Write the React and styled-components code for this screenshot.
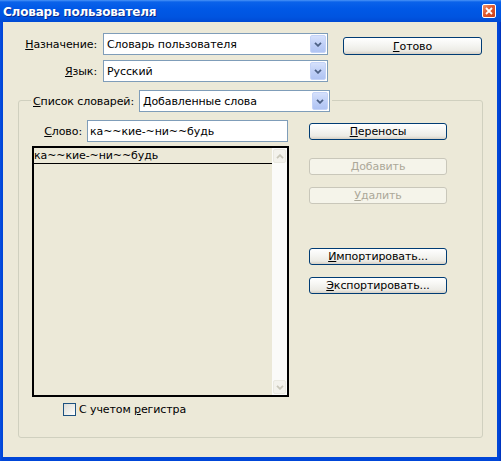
import React from 'react';
import styled, { createGlobalStyle } from 'styled-components';

const Global = createGlobalStyle`
  html, body { margin: 0; padding: 0; background: #ECE9D8; }
  body { font-family: "DejaVu Sans", Tahoma, sans-serif; font-size: 11px; color: #000; letter-spacing: -0.1px; }
  #root { width: 501px; height: 461px; }
  u { text-decoration: underline; text-underline-offset: 1px; }
`;

const Window = styled.div`
  width: 501px;
  height: 461px;
  box-sizing: border-box;
  display: flex;
  flex-direction: column;
  overflow: hidden;
  background: linear-gradient(90deg, #0a4fe0 0, #0046d8 2px, #0046d8 calc(100% - 2px), #0030b8 100%);
`;

const TitleBar = styled.div`
  height: 22px;
  flex: none;
  display: flex;
  align-items: center;
  justify-content: space-between;
  padding: 0 5px 0 3px;
  background: linear-gradient(#4a94f7 0, #0a62ea 2px, #0058e6 9px, #0054e0 17px, #004ad4 22px);
  color: #fff;
`;

const TitleText = styled.span`
  font-family: "DejaVu Sans", sans-serif;
  font-weight: bold;
  font-size: 12px;
  letter-spacing: -0.2px;
  text-shadow: 1px 1px 0 #0a2a8a;
  padding-top: 1px;
`;

const CloseBtn = styled.div`
  width: 14px;
  height: 14px;
  box-sizing: border-box;
  border: 1px solid #fff;
  border-radius: 2px;
  background: linear-gradient(135deg, #f0946c 0%, #e05a30 45%, #c8401a 100%);
  display: flex;
  align-items: center;
  justify-content: center;
`;

const Client = styled.div`
  flex: 1;
  margin: 0 4px 4px 3px;
  background: #ECE9D8;
  display: flex;
  flex-direction: column;
`;

const TopSection = styled.div`
  display: flex;
  align-items: flex-start;
  padding: 11px 0 0 4px;
`;

const FieldsGrid = styled.div`
  display: grid;
  grid-template-columns: 90px 225px;
  column-gap: 6px;
  row-gap: 5px;
  align-items: center;
`;

const Label = styled.span`
  justify-self: end;
  white-space: nowrap;
`;

const Combo = styled.div`
  box-sizing: border-box;
  width: ${(p) => p.$w}px;
  height: 22px;
  border: 1px solid #7F9DB9;
  background: #fff;
  display: flex;
  align-items: center;
  padding-left: 3px;
`;

const ComboText = styled.span`
  flex: 1;
  white-space: nowrap;
  overflow: hidden;
`;

const DropBtn = styled.div`
  box-sizing: border-box;
  width: 16px;
  height: 18px;
  margin-right: 1px;
  border: 1px solid #c4d3f8;
  border-radius: 2px;
  background: linear-gradient(#d6e1fc, #bccdf6 60%, #b0c4f3);
  display: flex;
  align-items: center;
  justify-content: center;
`;

const Button = styled.div`
  box-sizing: border-box;
  flex: none;
  width: ${(p) => p.$w || 138}px;
  height: ${(p) => p.$h || 17}px;
  margin-top: ${(p) => p.$mt || 0}px;
  margin-left: ${(p) => p.$ml || 0}px;
  border: 1px solid ${(p) => (p.$disabled ? '#C9C7BA' : '#003C74')};
  border-radius: 3px;
  background: ${(p) =>
    p.$disabled
      ? '#F5F4EA'
      : 'linear-gradient(#FFFFFF 0%, #F6F6F3 40%, #ECEBE5 80%, #D6D0C5 100%)'};
  color: ${(p) => (p.$disabled ? '#ACA899' : '#000')};
  display: flex;
  align-items: center;
  justify-content: center;
  white-space: nowrap;
`;

const Group = styled.div`
  box-sizing: border-box;
  width: 465px;
  margin: 18px 0 0 15px;
  border: 1px solid #D0D0BF;
  border-radius: 3px;
  padding-bottom: 21px;
`;

const Legend = styled.div`
  display: flex;
  align-items: center;
  gap: 5px;
  width: fit-content;
  margin: -11px 0 0 12px;
  padding: 0 2px;
  background: #ECE9D8;
`;

const Body = styled.div`
  display: flex;
  gap: 20px;
  padding-left: 13px;
`;

const LeftCol = styled.div`
  width: 257px;
  display: flex;
  flex-direction: column;
`;

const WordRow = styled.div`
  display: flex;
  justify-content: flex-end;
  align-items: center;
  gap: 5px;
  margin-top: 8px;
  padding-right: 1px;
`;

const TextBox = styled.div`
  box-sizing: border-box;
  width: 201px;
  height: 22px;
  border: 1px solid #7F9DB9;
  background: #fff;
  padding-left: 2px;
  display: flex;
  align-items: center;
  white-space: nowrap;
`;

const ListBox = styled.div`
  box-sizing: border-box;
  margin-top: 4px;
  height: 251px;
  border: 2px solid #000;
  background: #ECE9D8;
  display: flex;
`;

const ListItems = styled.div`
  flex: 1;
`;

const ListRow = styled.div`
  height: 15px;
  border-bottom: 1px solid #000;
  display: flex;
  align-items: center;
  white-space: nowrap;
`;

const ScrollBar = styled.div`
  width: 15px;
  background: #FBFBF9;
  display: flex;
  flex-direction: column;
  justify-content: space-between;
  align-items: center;
  padding: 1px 0;
  box-sizing: border-box;
`;

const ScrollBtn = styled.div`
  box-sizing: border-box;
  width: 13px;
  height: 14px;
  border: 1px solid #EAE9E1;
  border-radius: 2px;
  background: #F3F2EC;
  display: flex;
  align-items: center;
  justify-content: center;
`;

const CheckRow = styled.div`
  display: flex;
  align-items: center;
  gap: 3px;
  margin-top: 6px;
  padding-left: 31px;
  height: 13px;
`;

const CheckBox = styled.div`
  box-sizing: border-box;
  width: 13px;
  height: 13px;
  border: 1px solid #1C5180;
  background: linear-gradient(135deg, #DCDCD7 0%, #F0F0EC 60%, #FFFFFF 100%);
`;

const RightCol = styled.div`
  display: flex;
  flex-direction: column;
  padding-top: 11px;
`;

const Chevron = ({ color = '#4D6185', up = false }) => (
  <svg width="8" height="5" viewBox="0 0 8 5">
    <path
      d={up ? 'M1 4.2 L4 1.2 L7 4.2' : 'M1 0.8 L4 3.8 L7 0.8'}
      fill="none"
      stroke={color}
      strokeWidth="1.8"
    />
  </svg>
);

const Drop = () => (
  <DropBtn>
    <Chevron />
  </DropBtn>
);

export default function App() {
  return (
    <>
      <Global />
      <Window>
        <TitleBar>
          <TitleText>Словарь пользователя</TitleText>
          <CloseBtn>
            <svg width="8" height="8" viewBox="0 0 8 8">
              <path d="M1 1 L7 7 M7 1 L1 7" stroke="#fff" strokeWidth="1.8" />
            </svg>
          </CloseBtn>
        </TitleBar>
        <Client>
          <TopSection>
            <FieldsGrid>
              <Label>
                <u>Н</u>азначение:
              </Label>
              <Combo $w={225}>
                <ComboText>Словарь пользователя</ComboText>
                <Drop />
              </Combo>
              <Label>
                <u>Я</u>зык:
              </Label>
              <Combo $w={225}>
                <ComboText>Русский</ComboText>
                <Drop />
              </Combo>
            </FieldsGrid>
            <Button $w={139} $h={18} $mt={4} $ml={15}>
              <span>
                <u>Г</u>отово
              </span>
            </Button>
          </TopSection>

          <Group>
            <Legend>
              <span>
                <u>С</u>писок словарей:
              </span>
              <Combo $w={191}>
                <ComboText>Добавленные слова</ComboText>
                <Drop />
              </Combo>
            </Legend>
            <Body>
              <LeftCol>
                <WordRow>
                  <span>
                    <u>С</u>лово:
                  </span>
                  <TextBox>ка~~кие-~ни~~будь</TextBox>
                </WordRow>
                <ListBox>
                  <ListItems>
                    <ListRow>ка~~кие-~ни~~будь</ListRow>
                  </ListItems>
                  <ScrollBar>
                    <ScrollBtn>
                      <Chevron up color="#C9C7BA" />
                    </ScrollBtn>
                    <ScrollBtn>
                      <Chevron color="#C9C7BA" />
                    </ScrollBtn>
                  </ScrollBar>
                </ListBox>
                <CheckRow>
                  <CheckBox />
                  <span>
                    С учетом <u>р</u>егистра
                  </span>
                </CheckRow>
              </LeftCol>
              <RightCol>
                <Button>
                  <span>
                    <u>П</u>ереносы
                  </span>
                </Button>
                <Button $disabled $mt={18}>
                  <span>
                    <u>Д</u>обавить
                  </span>
                </Button>
                <Button $disabled $mt={12}>
                  <span>
                    <u>У</u>далить
                  </span>
                </Button>
                <Button $mt={44}>
                  <span>
                    <u>И</u>мпортировать...
                  </span>
                </Button>
                <Button $mt={12}>
                  <span>
                    <u>Э</u>кспортировать...
                  </span>
                </Button>
              </RightCol>
            </Body>
          </Group>
        </Client>
      </Window>
    </>
  );
}
